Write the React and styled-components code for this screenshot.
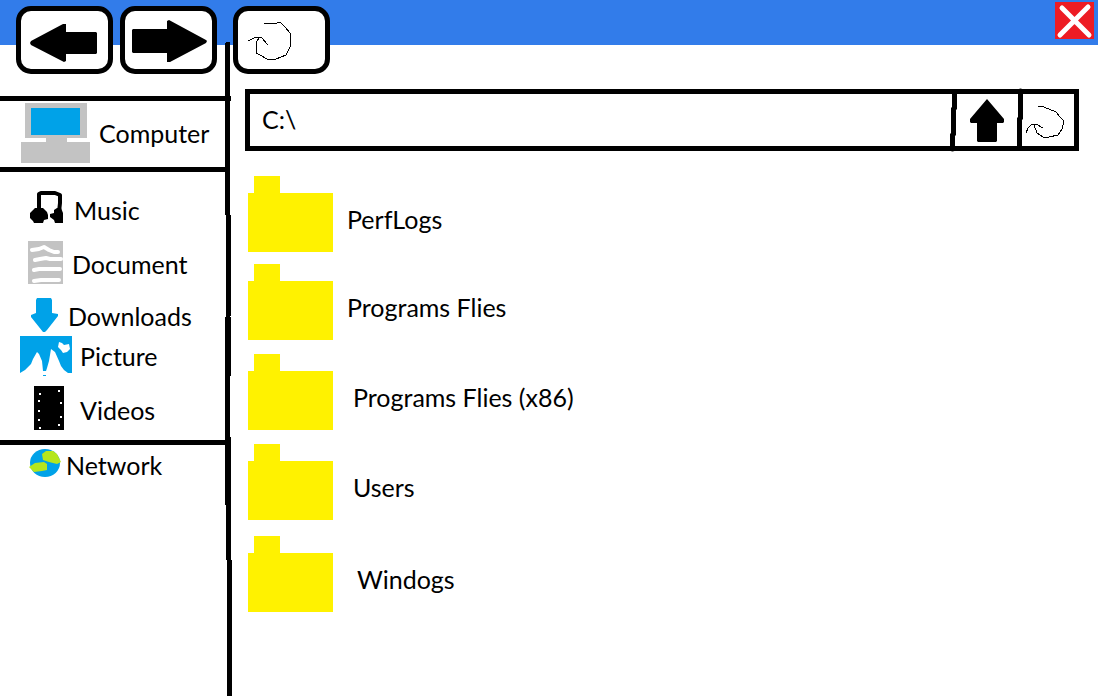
import React from "react";
import styled, { createGlobalStyle } from "styled-components";

const GlobalStyle = createGlobalStyle`
  * { box-sizing: border-box; }
  body { margin: 0; background: #fff; color: #000; font-family: Lato, "Liberation Sans", sans-serif; font-size: 25px; line-height: 32px; }
  button, input { font: inherit; color: inherit; }
  ul { list-style: none; margin: 0; padding: 0; }
  svg { display: block; flex: none; overflow: visible; }
`;

const Window = styled.div`
  min-height: 100vh;
  display: flex;
  flex-direction: column;
`;

const TitleBar = styled.header`
  height: 45px;
  background: #327cea;
  display: flex;
  justify-content: space-between;
  align-items: flex-start;
  padding: 2px 4px 0 16px;
`;

const Toolbar = styled.nav`
  position: relative;
  z-index: 1;
  display: flex;
  gap: 16px;
  padding-top: 4px;
`;

const HistoryButtons = styled.div`
  display: flex;
  gap: 7px;
`;

const ToolButton = styled.button`
  width: 97px;
  height: 68px;
  padding: 0;
  background: #fff;
  border: 5px solid #000;
  border-radius: 15px;
`;

const CloseButton = styled.button`
  width: 39px;
  height: 37px;
  padding: 0;
  border: 0;
  background: #ed1c24;
`;

const Body = styled.div`
  flex: 1;
  display: flex;
  margin-top: -3px;
`;

const Sidebar = styled.aside`
  flex: none;
  width: 225px;
  padding-top: 54px;
`;

const Section = styled.ul`
  border-top: 5px solid #000;
  padding: ${(p) => p.$pad};
`;

const Place = styled.a`
  display: flex;
  align-items: center;
  height: ${(p) => p.$height || 40}px;
  margin-top: ${(p) => p.$gap || 0}px;
  padding-left: 20px;
  color: inherit;
  text-decoration: none;
`;

const Divider = styled.div`
  flex: none;
  position: relative;
  width: 8px;
  overflow: hidden;
  svg { position: absolute; top: 0; left: 0; }
`;

const Main = styled.main`
  flex: 1;
  min-width: 0;
  padding: 47px 19px 24px 12px;
`;

const AddressBar = styled.form`
  display: flex;
  height: 62px;
  border: 5px solid #000;
`;

const AddressInput = styled.input`
  flex: 1;
  min-width: 0;
  padding: 0 12px 2px;
  border: 0;
  outline: 0;
  background: transparent;
`;

const AddressButton = styled.button`
  width: ${(p) => p.$width}px;
  padding: 0;
  border: 0;
  background: transparent;
`;

const Folders = styled.ul`
  padding: 25px 0 0 3px;
`;

const Folder = styled.a`
  display: flex;
  align-items: center;
  gap: ${(p) => p.$gap}px;
  margin-bottom: ${(p) => p.$after}px;
  color: inherit;
  text-decoration: none;
`;

const FolderName = styled.span`
  padding-top: 10px;
`;

const GRAY = "#c3c3c3";
const SKY = "#00a2e8";
const LIME = "#b5e61d";

const thin = { fill: "none", stroke: "#000", strokeWidth: 1, shapeRendering: "crispEdges" };

const BackIcon = () => (
  <svg width="87" height="58" viewBox="21 11 87 58" aria-hidden="true">
    <path d="M30 43 31 41 63 24H66V32H96L97 33V53L96 54H66V61L64 62 31 45Z" />
  </svg>
);

const ForwardIcon = () => (
  <svg width="87" height="58" viewBox="125 11 87 58" aria-hidden="true">
    <path d="M132 30 133 29H167V21L169 20 206 40 207 41 206 43 170 62H167V53H133L132 52Z" />
  </svg>
);

const ReloadIcon = () => (
  <svg width="87" height="58" viewBox="238 11 87 58" aria-hidden="true" {...thin}>
    <path d="M264 23.5H275L280 22 285 27 290 33 291 39 290 47 286 55 276 59H267L260 55 256 53V43L259 38" />
    <path d="M248 41 256 37H261L268 45" />
  </svg>
);

const CloseIcon = () => (
  <svg width="39" height="37" viewBox="1055 2 39 37" aria-hidden="true">
    <path d="M1062 8 1089 35M1088 7 1060 35" stroke="#fff" strokeWidth="5" strokeLinecap="round" />
  </svg>
);

const UpIcon = () => (
  <svg width="61" height="52" viewBox="957 94 61 52" aria-hidden="true">
    <path d="M987 99 1004 119V122L1003 123H997V141L996 142H978L977 141V123H971L970 122V119Z" />
  </svg>
);

const RefreshIcon = () => (
  <svg width="51" height="52" viewBox="1023 94 51 52" aria-hidden="true" {...thin}>
    <path d="M1038 106 1044 107 1056 112 1060 117 1064 121 1062 129 1058 135 1049 137H1043L1037 133 1034 125" />
    <path d="M1026 133 1028 128 1031 125 1036 124 1043 128" />
  </svg>
);

const BarStroke = ({ d }) => (
  <svg width="5" height="52" viewBox="0 0 5 52" aria-hidden="true">
    <path d={d} fill="none" stroke="#000" strokeWidth="5" strokeLinecap="round" />
  </svg>
);

const ComputerIcon = () => (
  <svg width="79" height="60" viewBox="20 103 79 60" aria-hidden="true" shapeRendering="crispEdges">
    <path fill={GRAY} d="M25 103H87V138H67V142H90V163H21V142H46V138H25Z" />
    <path fill={SKY} d="M31 108H80V135H31Z" />
  </svg>
);

const MusicIcon = () => (
  <svg width="54" height="40" viewBox="20 190 54 40" aria-hidden="true">
    <path d="M39 212V194L41 193H55L60 195V203L59 212" fill="none" stroke="#000" strokeWidth="4" strokeLinejoin="round" />
    <path d="M35 208H43L47 212 48 215V219L44 220 43 223H34L33 221 30 218V213ZM54 210 57 208H61L63 213V223H55L54 220 50 217V214L54 213Z" />
  </svg>
);

const DocumentIcon = () => (
  <svg width="52" height="44" viewBox="20 242 52 44" aria-hidden="true">
    <path fill={GRAY} d="M28 241H63V284H28Z" />
    <path
      d="M32 250 39 249 44 247 49 250 54 252H58M35 260 40 259 46 258 50 259H61M34 270 39 269H60M34 281 41 280H59"
      fill="none" stroke="#fff" strokeWidth="4" strokeLinecap="round" strokeLinejoin="round"
    />
  </svg>
);

const DownloadsIcon = () => (
  <svg width="48" height="40" viewBox="20 296 48 40" aria-hidden="true">
    <path fill={SKY} d="M37 298H51L52 300V313L58 314V316L47 330 45 332H43L31 317V315L36 313V300Z" />
  </svg>
);

const PictureIcon = () => (
  <svg width="60" height="40" viewBox="20 336 60 40" aria-hidden="true">
    <path fill={SKY} d="M20 336H72V373H68L64 370 61 366 59 361 55 352 51 349 49 361 47 368 46 371H43L42 361 39 354 37 352 33 359 31 364 25 370 20 373ZM43 375H46V376H43Z" />
    <path fill="#fff" d="M59 342 62 343 64 345 69 344 70 349 67 352 63 353 61 350 58 347Z" />
  </svg>
);

const HOLES = [[39, 393], [38, 400], [38, 410], [38, 419], [39, 427], [58, 390], [60, 402], [60, 416], [58, 424]];

const VideosIcon = () => (
  <svg width="60" height="44" viewBox="20 388 60 44" aria-hidden="true" shapeRendering="crispEdges">
    <path d="M34 386H64V430H34Z" />
    {HOLES.map(([x, y]) => (
      <rect key={`${x}-${y}`} x={x} y={y} width="2" height="2" fill="#fff" />
    ))}
  </svg>
);

const NetworkIcon = () => (
  <svg width="46" height="40" viewBox="20 446 46 40" aria-hidden="true">
    <ellipse cx="45" cy="464" rx="15" ry="14" fill={SKY} />
    <path fill={LIME} d="M42 455 46 452H53L57 455 59 459 61 463 57 465 49 463 43 461ZM29 468 35 464 44 463 47 465V471L42 472 34 473Z" />
  </svg>
);

const FolderIcon = () => (
  <svg width="85" height="76" viewBox="0 0 85 76" aria-hidden="true" shapeRendering="crispEdges">
    <path fill="#fff200" d="M6 0H32V17H85V76H0V17H6Z" />
  </svg>
);

// Hand-drawn vertical rule, continuing straight down for tall windows.
const DividerStroke = () => (
  <svg width="8" height="4000" viewBox="225 42 8 4000" aria-hidden="true" shapeRendering="crispEdges">
    <path d="M226 42H229L230 43V96H231V101H230V215H231V316H230V317H231V376H230V437H231V560H232V4042H227V560H226V505H225V317H226V215H225V43Z" />
  </svg>
);

const PLACES = [
  { name: "Music", Icon: MusicIcon },
  { name: "Document", Icon: DocumentIcon, gap: 14 },
  { name: "Downloads", Icon: DownloadsIcon, gap: 12 },
  { name: "Picture", Icon: PictureIcon },
  { name: "Videos", Icon: VideosIcon, gap: 14 },
];

const FOLDERS = [
  { name: "PerfLogs", gap: 14, after: 12 },
  { name: "Programs Flies", gap: 14, after: 14 },
  { name: "Programs Flies (x86)", gap: 20, after: 14 },
  { name: "Users", gap: 20, after: 16 },
  { name: "Windogs", gap: 24, after: 0 },
];

export default function App() {
  return (
    <Window>
      <GlobalStyle />
      <TitleBar>
        <Toolbar>
          <HistoryButtons>
            <ToolButton aria-label="Back"><BackIcon /></ToolButton>
            <ToolButton aria-label="Forward"><ForwardIcon /></ToolButton>
          </HistoryButtons>
          <ToolButton aria-label="Reload"><ReloadIcon /></ToolButton>
        </Toolbar>
        <CloseButton aria-label="Close"><CloseIcon /></CloseButton>
      </TitleBar>
      <Body>
        <Sidebar>
          <Section $pad="0 0 2px">
            <li><Place href="#computer" $height={64}><ComputerIcon />Computer</Place></li>
          </Section>
          <Section $pad="18px 0 10px">
            {PLACES.map(({ name, Icon, gap }) => (
              <li key={name}>
                <Place href={`#${name}`} $gap={gap}><Icon />{name}</Place>
              </li>
            ))}
          </Section>
          <Section $pad="0">
            <li><Place href="#network"><NetworkIcon />Network</Place></li>
          </Section>
        </Sidebar>
        <Divider><DividerStroke /></Divider>
        <Main>
          <AddressBar onSubmit={(e) => e.preventDefault()}>
            <AddressInput aria-label="Address" defaultValue={"C:\\"} />
            <BarStroke d="M2.5 0V14L1.5 15V40L.5 41V55" />
            <AddressButton type="button" aria-label="Up" $width={61}><UpIcon /></AddressButton>
            <BarStroke d="M2.5 -3V24L1.5 25V52" />
            <AddressButton type="submit" aria-label="Refresh" $width={51}><RefreshIcon /></AddressButton>
          </AddressBar>
          <Folders>
            {FOLDERS.map(({ name, gap, after }) => (
              <li key={name}>
                <Folder href="#folder" $gap={gap} $after={after}>
                  <FolderIcon />
                  <FolderName>{name}</FolderName>
                </Folder>
              </li>
            ))}
          </Folders>
        </Main>
      </Body>
    </Window>
  );
}
